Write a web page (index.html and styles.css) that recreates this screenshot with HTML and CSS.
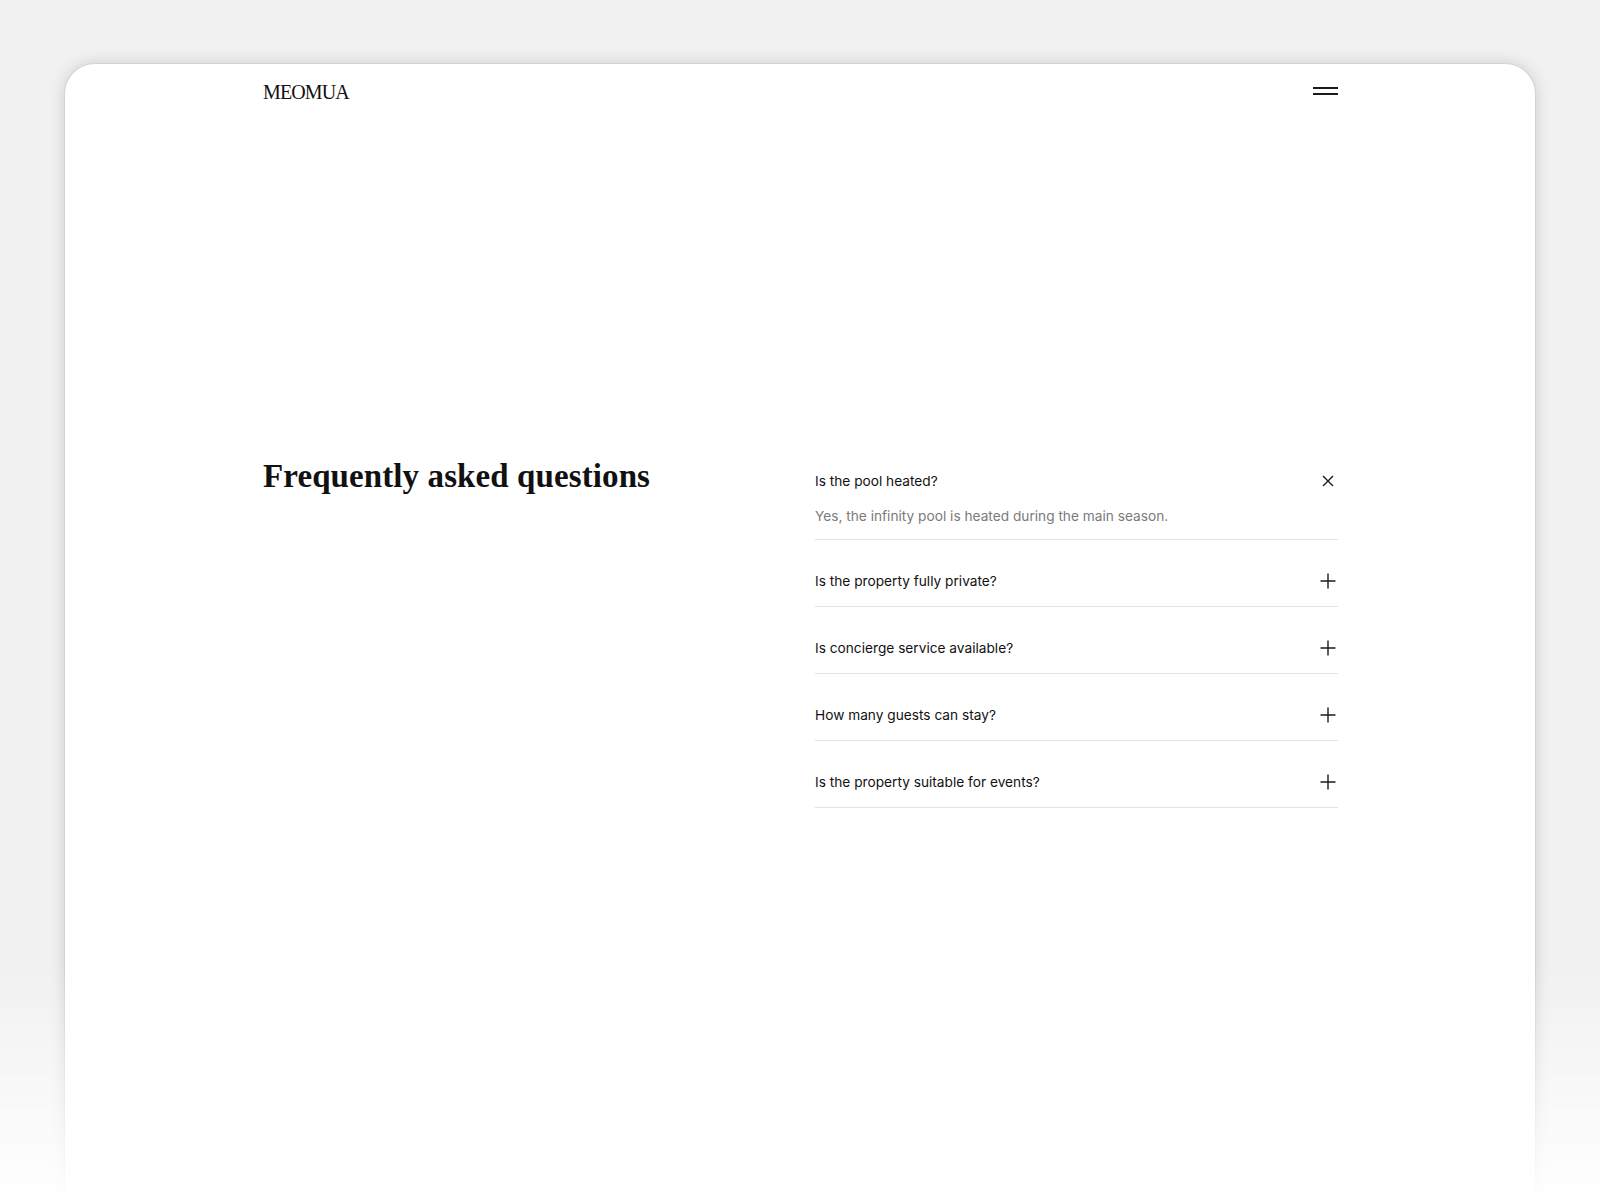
FILE: index.html
```html
<!DOCTYPE html>
<html lang="en">
<head>
<meta charset="utf-8">
<title>MEOMUA — FAQ</title>
<link rel="stylesheet" href="styles.css">
</head>
<body>
<div class="frame">
  <header class="header">
    <div class="logo">MEOMUA</div>
    <button class="menu" aria-label="Menu"><span></span><span></span></button>
  </header>
  <main class="faq">
    <h2 class="faq-title">Frequently asked questions</h2>
    <div class="faq-list">
      <div class="item open">
        <div class="q"><span>Is the pool heated?</span>
          <svg class="icon x" viewBox="0 0 12 12" width="12" height="12"><path d="M1 1L11 11M11 1L1 11" stroke="#1a1a1a" stroke-width="1.4" fill="none"/></svg>
        </div>
        <p class="a">Yes, the infinity pool is heated during the main season.</p>
      </div>
      <div class="item">
        <div class="q"><span>Is the property fully private?</span>
          <svg class="icon" viewBox="0 0 16 16" width="16" height="16"><path d="M8 0.5V15.5M0.5 8H15.5" stroke="#1a1a1a" stroke-width="1.4" fill="none"/></svg>
        </div>
      </div>
      <div class="item">
        <div class="q"><span>Is concierge service available?</span>
          <svg class="icon" viewBox="0 0 16 16" width="16" height="16"><path d="M8 0.5V15.5M0.5 8H15.5" stroke="#1a1a1a" stroke-width="1.4" fill="none"/></svg>
        </div>
      </div>
      <div class="item">
        <div class="q"><span>How many guests can stay?</span>
          <svg class="icon" viewBox="0 0 16 16" width="16" height="16"><path d="M8 0.5V15.5M0.5 8H15.5" stroke="#1a1a1a" stroke-width="1.4" fill="none"/></svg>
        </div>
      </div>
      <div class="item">
        <div class="q"><span>Is the property suitable for events?</span>
          <svg class="icon" viewBox="0 0 16 16" width="16" height="16"><path d="M8 0.5V15.5M0.5 8H15.5" stroke="#1a1a1a" stroke-width="1.4" fill="none"/></svg>
        </div>
      </div>
    </div>
  </main>
</div>
<div class="fade"></div>
</body>
</html>
```

FILE: styles.css
```css
* { box-sizing: border-box; }
html, body { margin: 0; padding: 0; }
body {
  background: #f1f1f1;
  height: 1200px;
  overflow: hidden;
  font-family: Inter, "Liberation Sans", sans-serif;
  color: #111;
}
.frame {
  margin: 64px 0 0 65px;
  width: 1470px;
  min-height: 1300px;
  background: #fff;
  border-radius: 30px 30px 0 0;
  box-shadow: 0 0 0 1px rgba(0,0,0,0.05), 0 0 16px rgba(0,0,0,0.17);
  padding: 0 197px 0 198px;
}
.header {
  display: flex;
  justify-content: space-between;
  align-items: center;
  padding: 16px 0;
}
.logo {
  font-family: "Liberation Serif", serif;
  font-size: 20px;
  line-height: 24px;
  letter-spacing: -0.9px;
  color: #111;
}
.menu {
  display: flex;
  flex-direction: column;
  gap: 4px;
  width: 25px;
  padding: 0;
  border: 0;
  background: none;
  margin-top: -2px;
}
.menu span {
  display: block;
  height: 2px;
  width: 25px;
  background: #1a1a1a;
}
.faq {
  display: grid;
  grid-template-columns: 1fr 1fr;
  column-gap: 29px;
  padding-top: 336px;
  align-items: start;
}
.faq-title {
  margin: 0;
  font-family: "Liberation Serif", serif;
  font-weight: 700;
  font-size: 33px;
  line-height: 40px;
  letter-spacing: 0.1px;
  color: #111;
}
.faq-list { display: flex; flex-direction: column; gap: 16px; }
.item { border-bottom: 1px solid #e2e2e2; }
.q {
  display: flex;
  justify-content: space-between;
  align-items: center;
  padding: 15px 0;
  font-size: 13.7px;
  line-height: 20px;
  color: #111;
}
.icon { display: block; margin-right: 2px; }
.icon.x { margin-right: 4px; }
.a {
  margin: 0;
  padding-bottom: 13px;
  font-size: 13.7px;
  line-height: 20px;
  color: #7a7a7a;
}
.fade {
  position: fixed;
  left: 0;
  right: 0;
  bottom: 0;
  height: 240px;
  background: linear-gradient(to bottom, rgba(255,255,255,0) 0%, rgba(255,255,255,0.97) 100%);
  pointer-events: none;
}
```
